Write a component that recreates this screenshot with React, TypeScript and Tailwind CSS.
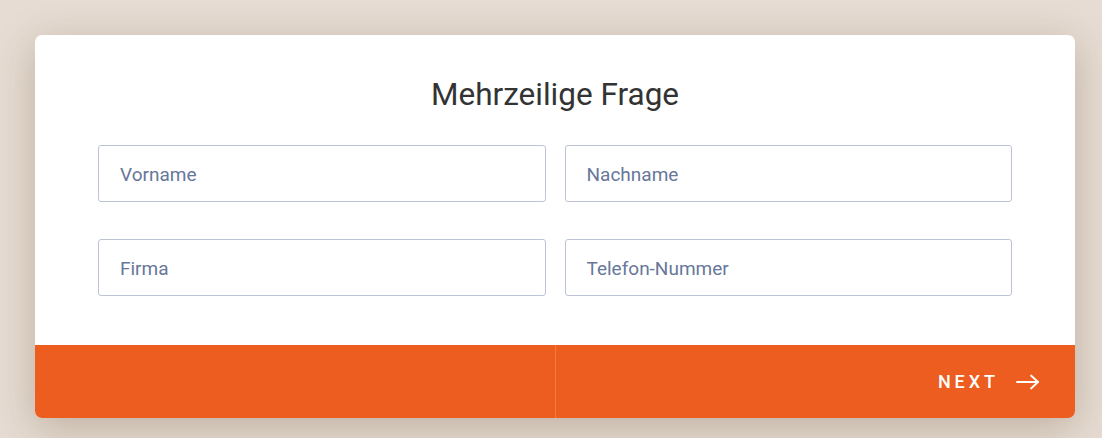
import React from "react";

const fields = ["Vorname", "Nachname", "Firma", "Telefon-Nummer"];

export default function App() {
  return (
    <div
      className="h-[438px] w-full bg-[#e6dcd3] pl-[35px] pt-[35px]"
      style={{ fontFamily: "Roboto, 'Liberation Sans', sans-serif" }}
    >
      <div className="w-[1040px] overflow-hidden rounded-[7px] bg-white shadow-[0_10px_40px_rgba(90,60,30,0.28)]">
        <div className="px-[63px] pb-[49px] pt-[38px]">
          <h1 className="text-center text-[31.5px] font-normal leading-[44px] text-[#333333]">
            Mehrzeilige Frage
          </h1>
          <div className="mt-[28px] grid grid-cols-2 gap-x-[19px] gap-y-[37px]">
            {fields.map((f) => (
              <input
                key={f}
                placeholder={f}
                className="h-[57px] rounded-[3px] border border-[#bcc3d6] bg-white px-[21px] pt-[2px] text-[19px] text-[#333] outline-none placeholder:text-[#67779a]"
              />
            ))}
          </div>
        </div>
        <div className="grid h-[73px] grid-cols-2 bg-[#ec5d1f]">
          <div />
          <div className="flex items-center justify-end border-l border-[#f47a3e] pr-[35px]">
            <button className="flex items-center gap-[17px] text-[18px] font-medium tracking-[0.22em] text-white">
              NEXT
              <svg width="24" height="16" viewBox="0 0 24 16" fill="none" stroke="white" strokeWidth="1.8" strokeLinecap="round" strokeLinejoin="round">
                <path d="M1 8h21" />
                <path d="M15 1.5 22 8l-7 6.5" />
              </svg>
            </button>
          </div>
        </div>
      </div>
    </div>
  );
}
